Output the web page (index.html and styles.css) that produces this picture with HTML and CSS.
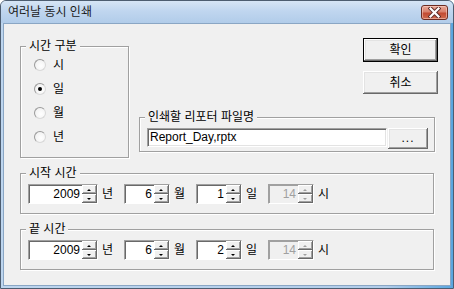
FILE: index.html
```html
<!DOCTYPE html>
<html lang="ko">
<head>
<meta charset="utf-8">
<title>여러날 동시 인쇄</title>
<link rel="stylesheet" href="styles.css">
</head>
<body>
<div class="window">
  <div class="titlebar">
    <span class="title">여러날 동시 인쇄</span>
    <span class="close">
      <svg width="13" height="11" viewBox="0 0 13 11">
        <path d="M2.5 1.5 L10.5 9.5 M10.5 1.5 L2.5 9.5" stroke="#5a2a28" stroke-width="4" stroke-linecap="square"/>
        <path d="M2.5 1.5 L10.5 9.5 M10.5 1.5 L2.5 9.5" stroke="#ffffff" stroke-width="2.2" stroke-linecap="square"/>
      </svg>
    </span>
  </div>
  <div class="client">
    <div class="top-row">
      <div class="group kind">
        <div class="legend">시간 구분</div>
        <div class="radio"><span class="rb"></span><span>시</span></div>
        <div class="radio"><span class="rb checked"></span><span>일</span></div>
        <div class="radio"><span class="rb"></span><span>월</span></div>
        <div class="radio"><span class="rb"></span><span>년</span></div>
      </div>
      <div class="right-col">
        <button class="btn default">확인</button>
        <button class="btn cancel">취소</button>
        <div class="group file">
          <div class="legend">인쇄할 리포터 파일명</div>
          <div class="file-row">
            <div class="edit">Report_Day,rptx</div>
            <button class="btn browse">...</button>
          </div>
        </div>
      </div>
    </div>

    <div class="group tgroup">
      <div class="legend">시작 시간</div>
      <div class="spin-row">
        <div class="spin year"><div class="val">2009</div><div class="btns"><span class="sb"><i class="up"></i></span><span class="sb"><i class="down"></i></span></div></div>
        <span class="unit">년</span>
        <div class="spin"><div class="val">6</div><div class="btns"><span class="sb"><i class="up"></i></span><span class="sb"><i class="down"></i></span></div></div>
        <span class="unit">월</span>
        <div class="spin"><div class="val">1</div><div class="btns"><span class="sb"><i class="up"></i></span><span class="sb"><i class="down"></i></span></div></div>
        <span class="unit">일</span>
        <div class="spin disabled"><div class="val">14</div><div class="btns"><span class="sb"><i class="up"></i></span><span class="sb"><i class="down"></i></span></div></div>
        <span class="unit">시</span>
      </div>
    </div>

    <div class="group tgroup">
      <div class="legend">끝 시간</div>
      <div class="spin-row">
        <div class="spin year"><div class="val">2009</div><div class="btns"><span class="sb"><i class="up"></i></span><span class="sb"><i class="down"></i></span></div></div>
        <span class="unit">년</span>
        <div class="spin"><div class="val">6</div><div class="btns"><span class="sb"><i class="up"></i></span><span class="sb"><i class="down"></i></span></div></div>
        <span class="unit">월</span>
        <div class="spin"><div class="val">2</div><div class="btns"><span class="sb"><i class="up"></i></span><span class="sb"><i class="down"></i></span></div></div>
        <span class="unit">일</span>
        <div class="spin disabled"><div class="val">14</div><div class="btns"><span class="sb"><i class="up"></i></span><span class="sb"><i class="down"></i></span></div></div>
        <span class="unit">시</span>
      </div>
    </div>
  </div>
</div>
</body>
</html>
```
FILE: styles.css
```css
html, body {
  margin: 0;
  padding: 0;
  background: #ffffff;
}
body {
  width: 454px;
  height: 289px;
  overflow: hidden;
  font-family: "Liberation Sans", "Noto Sans CJK KR", sans-serif;
  font-size: 12px;
  color: #000;
}
.window {
  width: 454px;
  height: 289px;
  box-sizing: border-box;
  border: 1px solid #4d5d70;
  border-radius: 6px 6px 0 0;
  background: linear-gradient(to right, #bdd5ee 0%, #b2cdea 85%, #5aa6df 100%);
  padding: 0 2px 2px 2px;
  display: flex;
  flex-direction: column;
}
.titlebar {
  height: 22px;
  flex: none;
  display: flex;
  align-items: flex-start;
  justify-content: space-between;
  background: linear-gradient(#d6e5f5 0%, #c0d6ef 45%, #b1cce9 100%);
  margin: 0 -2px;
  padding-left: 7px;
  padding-right: 5px;
  border-radius: 5px 5px 0 0;
}
.title {
  line-height: 14px;
  margin-top: 4px;
  color: #1a1a1a;
}
.close {
  width: 27px;
  height: 15px;
  margin-top: 4px;
  box-sizing: border-box;
  border: 1px solid #6b2b22;
  border-radius: 3px;
  background: linear-gradient(#eaa898 0%, #d7806c 45%, #c24a32 55%, #cf6a4e 100%);
  box-shadow: inset 0 0 0 1px rgba(255, 220, 210, 0.5);
  display: flex;
  align-items: center;
  justify-content: center;
}
.close svg { display: block; }
.client {
  flex: 1;
  background: #f0f0f0;
  border: 1px solid #8aa6c4;
  padding: 14px 0 0 16px;
  display: flex;
  flex-direction: column;
}
.top-row {
  display: flex;
  align-items: flex-start;
}
.group {
  box-sizing: border-box;
  border: 1px solid #a0a0a0;
  box-shadow: 1px 1px 0 #ffffff, inset 1px 1px 0 #ffffff;
}
.legend {
  display: block;
  width: max-content;
  margin-top: -8px;
  margin-left: 5px;
  padding: 0 3px;
  line-height: 14px;
  height: 14px;
  background: #f0f0f0;
}
.kind {
  width: 109px;
  height: 112px;
  margin-top: 8px;
}
.radio {
  height: 24px;
  display: flex;
  align-items: center;
  padding-left: 13px;
  line-height: 14px;
}
.rb {
  width: 12px;
  height: 12px;
  box-sizing: border-box;
  border-radius: 50%;
  border: 1px solid;
  border-color: #9a9a9a #d8d8d8 #d8d8d8 #9a9a9a;
  background: radial-gradient(circle at 60% 60%, #ffffff 0%, #f4f4f4 60%, #e2e2e2 100%);
  margin-right: 7px;
  display: flex;
  align-items: center;
  justify-content: center;
}
.rb.checked::after {
  content: "";
  width: 4px;
  height: 4px;
  border-radius: 50%;
  background: #000;
}
.right-col {
  margin-left: 10px;
  width: 299px;
  display: flex;
  flex-direction: column;
  align-items: flex-end;
}
.btn {
  font-family: "Liberation Sans", "Noto Sans CJK KR", sans-serif;
  font-size: 12px;
  color: #000;
  background: #f0f0f0;
  border: none;
  padding: 0;
  margin: 0;
  box-sizing: border-box;
  box-shadow: inset -1px -1px 0 #696969, inset 1px 1px 0 #ffffff, inset -2px -2px 0 #a0a0a0, inset 2px 2px 0 #e3e3e3;
  line-height: 14px;
}
.btn.default {
  width: 75px;
  height: 24px;
  border: 1px solid #000;
}
.btn.cancel {
  width: 75px;
  height: 23px;
  margin-top: 9px;
}
.file {
  width: 296px;
  height: 35px;
  margin-top: 23px;
  align-self: flex-start;
}
.file-row {
  display: flex;
  align-items: flex-start;
  padding-left: 7px;
  margin-top: 4px;
}
.edit {
  width: 240px;
  height: 19px;
  box-sizing: border-box;
  background: #fff;
  border-style: solid;
  border-width: 1px;
  border-color: #a0a0a0 #ffffff #ffffff #a0a0a0;
  box-shadow: inset 1px 1px 0 #696969, inset -1px -1px 0 #e3e3e3;
  padding: 1px 0 0 2px;
  line-height: 15px;
}
.btn.browse {
  width: 40px;
  height: 21px;
  margin-left: 1px;
  letter-spacing: 1px;
  padding-bottom: 2px;
}
.tgroup {
  width: 414px;
  height: 41px;
  margin-top: 15px;
}
.spin-row {
  display: flex;
  align-items: flex-start;
  padding-left: 7px;
  margin-top: 4px;
}
.spin {
  width: 46px;
  height: 20px;
  box-sizing: border-box;
  display: flex;
  border-style: solid;
  border-width: 1px;
  border-color: #a0a0a0 #ffffff #ffffff #a0a0a0;
}
.spin.year { width: 70px; }
.spin .val {
  flex: 1;
  background: #fff;
  border-top: 1px solid #696969;
  border-left: 1px solid #696969;
  text-align: right;
  padding-right: 2px;
  line-height: 17px;
}
.spin .btns {
  width: 15px;
  display: flex;
  flex-direction: column;
  background: #fff;
}
.sb {
  flex: 1;
  background: #f0f0f0;
  box-sizing: border-box;
  box-shadow: inset -1px -1px 0 #696969, inset 1px 1px 0 #ffffff, inset -2px -2px 0 #a0a0a0;
  display: flex;
  align-items: center;
  justify-content: center;
}
.sb i {
  display: block;
  width: 0;
  height: 0;
  border-left: 2px solid transparent;
  border-right: 2px solid transparent;
  margin-right: 1px;
}
.sb i.up { border-bottom: 2px solid #000; }
.sb i.down { border-top: 2px solid #000; }
.spin.disabled .val {
  background: #f0f0f0;
  color: #a0a0a0;
  border-color: #a0a0a0;
}
.spin.disabled .sb i.up { border-bottom-color: #a0a0a0; }
.spin.disabled .sb i.down { border-top-color: #a0a0a0; }
.unit {
  width: 22px;
  padding-left: 4px;
  line-height: 20px;
}
```
